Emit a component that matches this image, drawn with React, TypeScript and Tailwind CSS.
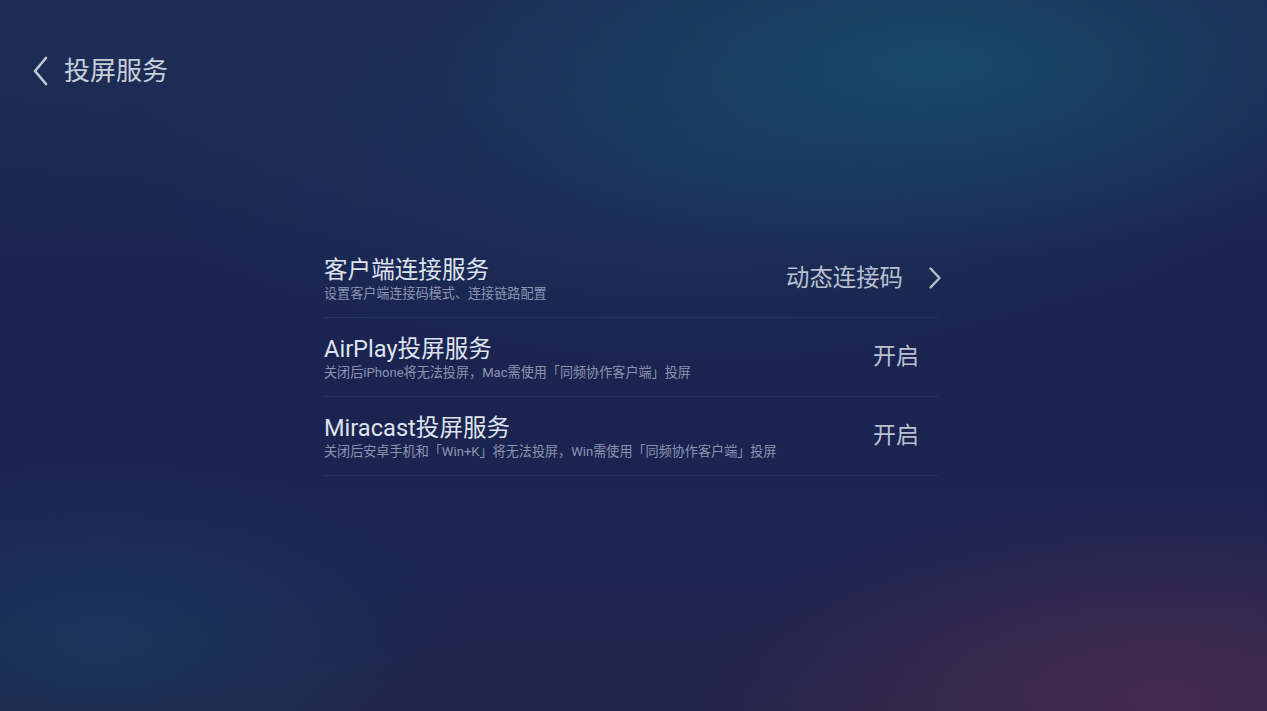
import React from "react";

const font = { fontFamily: 'Roboto, "Noto Sans CJK SC", sans-serif' };

function ChevronLeft() {
  return (
    <svg width="16" height="30" viewBox="0 0 16 30" fill="none">
      <path d="M14 2 L3 15 L14 28" stroke="#c3c9d8" strokeWidth="2.6" strokeLinecap="round" strokeLinejoin="round" />
    </svg>
  );
}

function ChevronRight() {
  return (
    <svg width="14" height="24" viewBox="0 0 14 24" fill="none">
      <path d="M2.5 2.5 L11.5 12 L2.5 21.5" stroke="#b9bfd0" strokeWidth="2.4" strokeLinecap="round" strokeLinejoin="round" />
    </svg>
  );
}

type Row = { title: string; sub: string; value: string; arrow?: boolean };

const rows: Row[] = [
  { title: "客户端连接服务", sub: "设置客户端连接码模式、连接链路配置", value: "动态连接码", arrow: true },
  { title: "AirPlay投屏服务", sub: "关闭后iPhone将无法投屏，Mac需使用「同频协作客户端」投屏", value: "开启" },
  { title: "Miracast投屏服务", sub: "关闭后安卓手机和「Win+K」将无法投屏，Win需使用「同频协作客户端」投屏", value: "开启" },
];

export default function App() {
  return (
    <div
      className="relative w-[1267px] h-[711px] overflow-hidden bg-[#1b2350] bg-[radial-gradient(ellipse_40%_28%_at_74%_9%,rgba(22,80,108,0.8)_0%,rgba(22,80,108,0)_100%),radial-gradient(ellipse_45%_32%_at_55%_22%,rgba(26,62,98,0.55)_0%,rgba(26,62,98,0)_100%),radial-gradient(ellipse_40%_30%_at_8%_8%,rgba(30,50,86,0.45)_0%,rgba(30,50,86,0)_100%),radial-gradient(ellipse_30%_25%_at_8%_90%,rgba(22,60,96,0.7)_0%,rgba(22,60,96,0)_100%),radial-gradient(ellipse_38%_28%_at_92%_98%,rgba(76,44,80,0.85)_0%,rgba(76,44,80,0)_100%),linear-gradient(180deg,#1c2a54_0%,#1b2350_45%,#1c2452_80%,#22244a_100%)]"
      style={font}
    >
      {/* header */}
      <div className="flex items-center pl-[32px] pt-[56px]">
        <ChevronLeft />
        <span className="ml-[16px] text-[26px] leading-[30px] text-[#c8cedc]">投屏服务</span>
      </div>

      {/* list */}
      <div className="absolute left-[324px] top-[239px] w-[614px]">
        {rows.map((r) => (
          <div
            key={r.title}
            className="flex h-[79px] items-center justify-between border-b border-[#22336a]"
          >
            <div className="flex flex-col pt-[2px]">
              <span className="text-[23.6px] leading-[28px] text-[#dde2ed]">{r.title}</span>
              <span className="mt-[2px] text-[13.1px] leading-[16px] text-[#8c94b1]">{r.sub}</span>
            </div>
            {r.arrow ? (
              <div className="flex items-center mr-[-4px]">
                <span className="text-[23.4px] leading-[28px] text-[#bac0d1]">{r.value}</span>
                <span className="ml-[25px] flex">
                  <ChevronRight />
                </span>
              </div>
            ) : (
              <span className="mr-[19px] text-[23px] leading-[28px] text-[#bac0d1]">{r.value}</span>
            )}
          </div>
        ))}
      </div>
    </div>
  );
}
